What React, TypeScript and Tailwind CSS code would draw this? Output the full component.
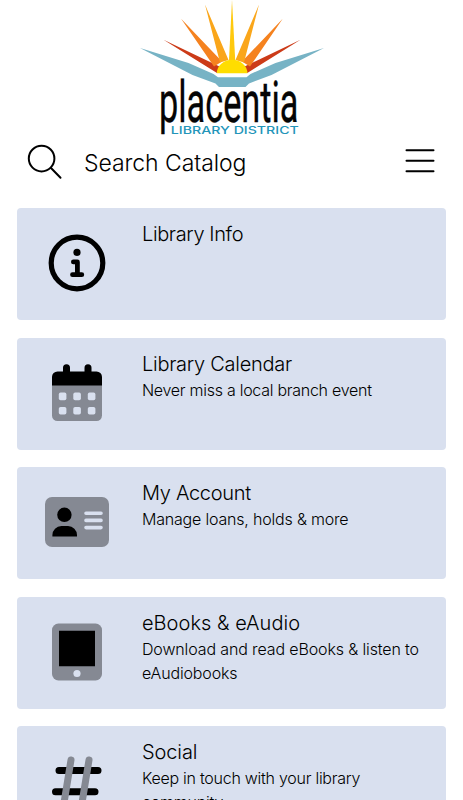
import type { ReactNode } from 'react';

function Logo() {
  return (
    <svg className="mx-auto block h-[138px] w-[200px] shrink-0 overflow-visible" viewBox="131.5 0 200 138" role="img" aria-label="Placentia Library District">
      <path fill="#77b3c5" d="M139.5 48 188 63 213 74 217.5 77.3H246L250 74 275 63 323.5 48 271 75 248.5 83.5 245 87H218.5L215 83.5 192 75Z" />
      <path fill="#cc3b18" d="M163 39.8 219 66.5 216.5 73ZM300 39.8 244 66.5 246.8 73Z" />
      <path fill="#f5821f" d="M180.6 18.8 221.5 61.5 213.5 66.5ZM282.2 18.8 241.5 61.5 249.5 66.5Z" />
      <path fill="#faa61a" d="M204.5 4.5 228 60 219.5 62.5ZM258.5 4.5 235 60 243.5 62.5Z" />
      <path fill="#ffc90d" d="M231.5 0 234.8 62H228.4Z" />
      <path fill="#ffdd00" d="M216.3 73.3A15.3 13.5 0 0 1 246.9 73.3Z" />
      <text x="158.5" y="121.8" textLength="139.5" lengthAdjust="spacingAndGlyphs" fill="#050505" stroke="#050505" strokeWidth="0.35" className="font-['Roboto',sans-serif] text-[57px] font-normal">placentia</text>
      <text x="170.3" y="133.5" textLength="128" lengthAdjust="spacingAndGlyphs" fill="#2395b9" className="font-['Inter',sans-serif] text-[9.8px] font-medium">LIBRARY DISTRICT</text>
    </svg>
  );
}

const icon = 'block h-[72px] w-[72px]';

function InfoIcon() {
  return (
    <svg className={icon} viewBox="0 0 72 72" fill="none">
      <circle cx="36" cy="36" r="25.8" stroke="#000" strokeWidth="5.2" />
      <circle cx="36" cy="25.4" r="3.6" fill="#000" />
      <path d="M32.4 34.9H36.4V47.7M31.5 47.7H40.8" stroke="#000" strokeWidth="4.8" strokeLinecap="round" strokeLinejoin="round" />
    </svg>
  );
}

function CalendarIcon() {
  return (
    <svg className={icon} viewBox="0 0 72 72">
      <path fill="#858993" d="M11 28H61V58.5A5.5 5.5 0 0 1 55.5 64H16.5A5.5 5.5 0 0 1 11 58.5Z" />
      <path fill="#000" d="M11 28.5V20A5.5 5.5 0 0 1 16.5 14.5H22V10.8A3.5 3.5 0 0 1 29 10.8V14.5H43.5V10.8A3.5 3.5 0 0 1 50.5 10.8V14.5H55.5A5.5 5.5 0 0 1 61 20V28.5Z" />
      {[17.8, 32.3, 46.8].map((x) => [35.6, 50].map((y) => (
        <rect key={`${x}-${y}`} x={x} y={y} width="7.6" height="7.6" rx="1.8" fill="#d9e0ef" />
      )))}
    </svg>
  );
}

function CardIcon() {
  return (
    <svg className={icon} viewBox="0 0 72 72">
      <rect x="4" y="11" width="64" height="50" rx="7" fill="#858993" />
      <circle cx="23.4" cy="28.8" r="7.2" fill="#000" />
      <path fill="#000" d="M11.4 50.5V49A9 9 0 0 1 20.4 40H27A9 9 0 0 1 36 49V50.5Z" />
      <path d="M45 27.2H60M45 34.4H60M45 41.6H60" stroke="#d9e0ef" strokeWidth="3.6" strokeLinecap="round" />
    </svg>
  );
}

function TabletIcon() {
  return (
    <svg className={icon} viewBox="0 0 72 72">
      <rect x="11" y="7.5" width="50" height="57" rx="6.5" fill="#858993" />
      <path d="M18 14.8H54V50.2H18Z" fill="#000" />
      <circle cx="36" cy="57.5" r="3.6" fill="#d9e0ef" />
    </svg>
  );
}

function HashIcon() {
  return (
    <svg className={icon} viewBox="0 0 72 72" strokeWidth="7" strokeLinecap="round">
      <path d="M18 25.5H57M14.5 46.7H54" stroke="#000" />
      <path d="M30 15 22 64M48 15 40 64" stroke="#858993" />
    </svg>
  );
}

type Item = { title: string; titleStyle: string; lines: [string, string][]; icon: ReactNode };

const items: Item[] = [
  { title: 'Library Info', titleStyle: 'tracking-[-0.38px]', lines: [], icon: <InfoIcon /> },
  { title: 'Library Calendar', titleStyle: 'tracking-[-0.27px]', lines: [['Never miss a local branch event', 'tracking-[-0.27px]']], icon: <CalendarIcon /> },
  { title: 'My Account', titleStyle: 'tracking-[-0.3px]', lines: [['Manage loans, holds & more', 'tracking-[-0.19px]']], icon: <CardIcon /> },
  { title: 'eBooks & eAudio', titleStyle: 'tracking-[0.03px]', lines: [['Download and read eBooks & listen to', 'tracking-[-0.13px]'], ['eAudiobooks', 'tracking-[-0.15px]']], icon: <TabletIcon /> },
  { title: 'Social', titleStyle: 'tracking-[-0.1px]', lines: [['Keep in touch with your library', 'tracking-[-0.26px]'], ['community', 'tracking-[-0.2px]']], icon: <HashIcon /> },
];

export default function App() {
  return (
    <div className="flex h-[800px] w-[463px] flex-col overflow-hidden bg-white font-['Inter','Liberation_Sans',sans-serif] font-light text-black">
      <Logo />
      <header className="flex h-[70px] shrink-0 items-start pl-[27px] pr-[28px]">
        <svg className="mt-[6px] h-9 w-9 shrink-0" viewBox="0 0 36 36" fill="none" stroke="#000" strokeWidth="2" strokeLinecap="round">
          <circle cx="14.6" cy="14.6" r="12.8" />
          <path d="M24 24 33.5 33.7" />
        </svg>
        <span className="ml-[21px] mt-[10px] grow whitespace-nowrap text-[23px] leading-[30px] tracking-[-0.07px]">Search Catalog</span>
        <svg className="mt-[11px] h-6 w-[30px] shrink-0" viewBox="0 0 30 24" stroke="#000" strokeWidth="2" strokeLinecap="round">
          <path d="M1.5 1.2H28.5M1.5 11.7H28.5M1.5 22.2H28.5" />
        </svg>
      </header>
      <main className="flex shrink-0 flex-col gap-[17.6px] pl-[17px] pr-[17px]">
        {items.map((item) => (
          <section key={item.title} className="flex h-[112px] items-start rounded-[4px] bg-[#d9e0ef]">
            <div className="ml-[23.6px] mt-[19px] w-[101.4px] shrink-0">{item.icon}</div>
            <div className="whitespace-nowrap pt-[12px]">
              <h2 className={`text-[20px] leading-[28px] ${item.titleStyle}`}>{item.title}</h2>
              {item.lines.map(([text, style]) => (
                <p key={text} className={`text-[16px] leading-[24px] ${style}`}>{text}</p>
              ))}
            </div>
          </section>
        ))}
      </main>
    </div>
  );
}
